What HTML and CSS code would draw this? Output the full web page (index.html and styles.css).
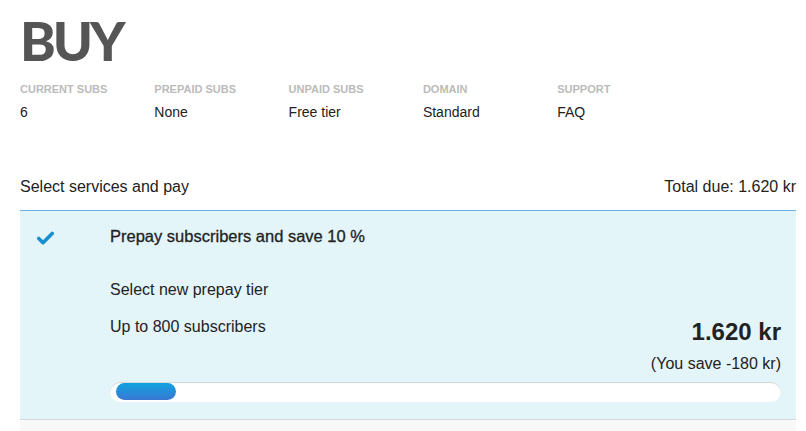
FILE: index.html
```html
<!DOCTYPE html>
<html>
<head>
<meta charset="utf-8">
<link rel="stylesheet" href="styles.css">
</head>
<body>
<div class="page">
  <h1 class="title">BUY</h1>
  <div class="stats">
    <div class="stat"><div class="label">CURRENT SUBS</div><div class="value">6</div></div>
    <div class="stat"><div class="label">PREPAID SUBS</div><div class="value">None</div></div>
    <div class="stat"><div class="label">UNPAID SUBS</div><div class="value">Free tier</div></div>
    <div class="stat"><div class="label">DOMAIN</div><div class="value">Standard</div></div>
    <div class="stat"><div class="label">SUPPORT</div><div class="value">FAQ</div></div>
  </div>
  <div class="section-head">
    <span>Select services and pay</span>
    <span>Total due: 1.620 kr</span>
  </div>
  <div class="panel">
    <div class="panel-row">
      <div class="check">
        <svg width="17" height="14" viewBox="0 0 17 14"><path d="M1.8 7.5 L6 11.7 L15.2 2.5" fill="none" stroke="#1b8ed0" stroke-width="3.6" stroke-linecap="round" stroke-linejoin="round"/></svg>
      </div>
      <div class="panel-body">
        <div class="service-title">Prepay subscribers and save 10 %</div>
        <div class="tier-label">Select new prepay tier</div>
        <div class="tier-row">
          <div class="tier-name">Up to 800 subscribers</div>
          <div class="tier-price">
            <div class="price">1.620 kr</div>
            <div class="save">(You save -180 kr)</div>
          </div>
        </div>
        <div class="track"><div class="thumb"></div></div>
      </div>
    </div>
  </div>
  <div class="footer-strip"></div>
</div>
</body>
</html>
```
FILE: styles.css
```css
html, body {
  margin: 0;
  padding: 0;
  background: #fff;
}
body {
  font-family: "Liberation Sans", Arial, sans-serif;
  color: #222;
  overflow: hidden;
}
.page {
  padding: 0 10px 0 20px;
}
.title {
  margin: 0;
  padding-top: 13px;
  font-family: Lato, "Open Sans", sans-serif;
  font-weight: 900;
  font-size: 54px;
  line-height: 56px;
  color: #555;
  letter-spacing: -3px;
}
.stats {
  display: flex;
  margin-top: 14px;
}
.stat {
  width: 134.3px;
}
.label {
  font-size: 11px;
  font-weight: bold;
  color: #bbb;
  line-height: 13px;
}
.value {
  font-size: 14px;
  line-height: 17px;
  margin-top: 8px;
  color: #222;
}
.section-head {
  display: flex;
  justify-content: space-between;
  margin-top: 57px;
  font-size: 16px;
  line-height: 18px;
  color: #222;
  padding-bottom: 14px;
  border-bottom: 1px solid #62aee6;
}
.panel {
  background: #e3f5f9;
  border-bottom: 1px solid #d3d8da;
  padding-bottom: 17px;
}
.panel-row {
  display: flex;
}
.check {
  width: 90px;
  padding: 20px 0 0 17px;
  box-sizing: border-box;
}
.panel-body {
  flex: 1;
  padding: 16px 15px 0 0;
}
.service-title {
  font-size: 16.5px;
  line-height: 18px;
  -webkit-text-stroke: 0.3px #222;
  color: #222;
}
.tier-label {
  font-size: 16px;
  line-height: 18px;
  margin-top: 36px;
  color: #222;
}
.tier-row {
  display: flex;
  justify-content: space-between;
  margin-top: 19px;
}
.tier-name {
  font-size: 16px;
  line-height: 18px;
  color: #222;
}
.tier-price {
  text-align: right;
}
.price {
  font-size: 24px;
  font-weight: bold;
  line-height: 28px;
  margin-top: 0;
  color: #222;
}
.save {
  font-size: 16px;
  line-height: 18px;
  margin-top: 9px;
  color: #222;
}
.track {
  margin-top: 9px;
  height: 20px;
  background: #fff;
  border-radius: 10px;
  box-shadow: inset 0 1px 1px #cfd5d8;
  box-sizing: border-box;
  padding: 1px 0 0 6px;
}
.thumb {
  width: 60px;
  height: 17px;
  border-radius: 9px;
  background: linear-gradient(#12a2df, #3978d3);
}
.footer-strip {
  height: 20px;
  background: #f8f8f8;
}
```
